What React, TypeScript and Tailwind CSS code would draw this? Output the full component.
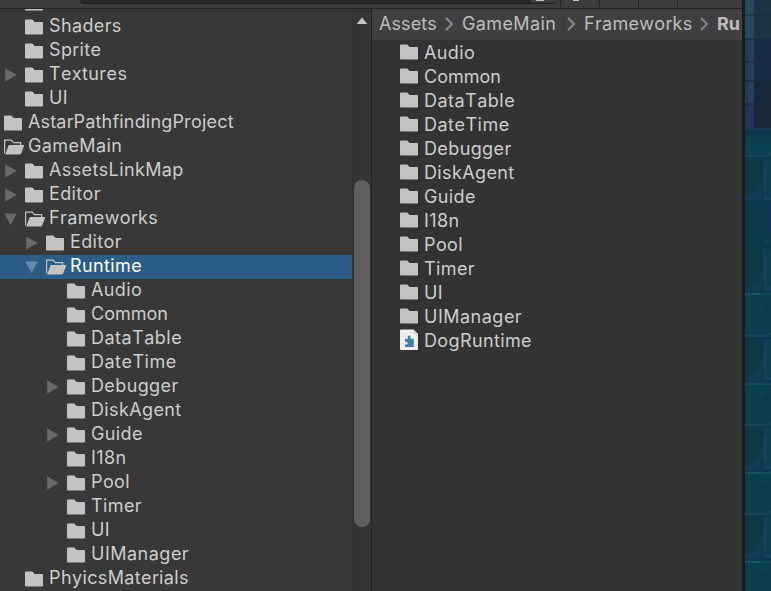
import React from "react";

type Arrow = "right" | "down" | null;
type Row = { name: string; depth: number; arrow?: Arrow; open?: boolean; selected?: boolean };

const tree: Row[] = [
  { name: "", depth: 1 },
  { name: "Shaders", depth: 1 },
  { name: "Sprite", depth: 1 },
  { name: "Textures", depth: 1, arrow: "right" },
  { name: "UI", depth: 1 },
  { name: "AstarPathfindingProject", depth: 0 },
  { name: "GameMain", depth: 0, open: true },
  { name: "AssetsLinkMap", depth: 1, arrow: "right" },
  { name: "Editor", depth: 1, arrow: "right" },
  { name: "Frameworks", depth: 1, arrow: "down", open: true },
  { name: "Editor", depth: 2, arrow: "right" },
  { name: "Runtime", depth: 2, arrow: "down", open: true, selected: true },
  { name: "Audio", depth: 3 },
  { name: "Common", depth: 3 },
  { name: "DataTable", depth: 3 },
  { name: "DateTime", depth: 3 },
  { name: "Debugger", depth: 3, arrow: "right" },
  { name: "DiskAgent", depth: 3 },
  { name: "Guide", depth: 3, arrow: "right" },
  { name: "I18n", depth: 3 },
  { name: "Pool", depth: 3, arrow: "right" },
  { name: "Timer", depth: 3 },
  { name: "UI", depth: 3 },
  { name: "UIManager", depth: 3 },
  { name: "PhyicsMaterials", depth: 1 },
];

const files = ["Audio", "Common", "DataTable", "DateTime", "Debugger", "DiskAgent", "Guide", "I18n", "Pool", "Timer", "UI", "UIManager"];

const indents = ["pl-0", "pl-[21px]", "pl-[42px]", "pl-[63px]"];

// Names whose letters need a slightly different spacing than the default.
const tracking: Record<string, string> = {
  AstarPathfindingProject: "tracking-[0.18px]",
  Common: "tracking-[0px]",
  UIManager: "tracking-[0.5px]",
  DataTable: "tracking-[0.5px]",
  DateTime: "tracking-[0.5px]",
};

function Folder() {
  return (
    <svg width="21" height="18" viewBox="0 0 21 18" className="shrink-0">
      <path d="M0 2.5Q0 1.5 1 1.5H7.3L9.6 4H17Q18 4 18 5V15.4Q18 16.4 17 16.4H1Q0 16.4 0 15.4Z" fill="#c3c3c3" />
    </svg>
  );
}

function OpenFolder() {
  return (
    <svg width="21" height="18" viewBox="0 0 21 18" className="shrink-0">
      <path d="M.6 15.5V2.2H7.3L9.4 4.6H16.6V7" fill="none" stroke="#c3c3c3" strokeWidth="1.2" />
      <path d="M5.6 7H19.6Q20.4 7 20.1 7.8L17.2 15.6Q16.9 16.4 16 16.4H1.2L4.3 8Q4.7 7 5.6 7Z" fill="#c3c3c3" />
    </svg>
  );
}

function Triangle({ dir, selected }: { dir?: Arrow; selected?: boolean }) {
  return (
    <svg width="21" height="24" viewBox="0 0 21 24" className="shrink-0" fill={selected ? "#668aaa" : "#696969"}>
      {dir === "right" && <path d="M1.2 5.6L13 12L1.2 18.4Z" />}
      {dir === "down" && <path d="M.4 6.5H12.8L6.6 18Z" />}
    </svg>
  );
}

function Label({ name }: { name: string }) {
  return <span className={`whitespace-nowrap ${tracking[name] ?? "tracking-[0.38px]"}`}>{name}</span>;
}

function TreeRow({ row }: { row: Row }) {
  return (
    <div className={`flex h-6 shrink-0 items-center ${row.selected ? "bg-[#2c5d87] text-white" : ""}`}>
      <div className={`flex items-center ${indents[row.depth]}`}>
        <div className="-ml-[17px] flex h-6 w-[21px]">
          <Triangle dir={row.arrow} selected={row.selected} />
        </div>
        <div className="mr-[3px]">{row.open ? <OpenFolder /> : <Folder />}</div>
        <div className="pb-[2px]">
          <Label name={row.name} />
        </div>
      </div>
    </div>
  );
}

function ScriptAssembly() {
  return (
    <svg width="21" height="22" viewBox="0 0 21 22" className="shrink-0">
      <path d="M0 1.5Q0 .5 1 .5H13.5L18 5V20Q18 21 17 21H1Q0 21 0 20Z" fill="#efefef" />
      <path d="M13.5 .5L18 5H14.5Q13.5 5 13.5 4Z" fill="#d2d2d2" />
      <path d="M7.9 9.8V8.8A1.5 1.5 0 1 1 10.5 8.8V9.8H13.8V18H5V15.6H6.2A1.4 1.4 0 0 0 6.2 12.8H5V9.8Z" fill="#437fa5" />
    </svg>
  );
}

function Separator() {
  return (
    <svg width="9" height="14" viewBox="0 0 9 14" className="shrink-0">
      <path d="M1 1L7 7L1 13" fill="none" stroke="#858585" strokeWidth="2.2" />
    </svg>
  );
}

const wallTops = [155, 245, 335, 424, 513];

function GameBackdrop() {
  return (
    <svg width="26" height="591" viewBox="0 0 26 591" shapeRendering="crispEdges" className="shrink-0">
      <rect width="26" height="591" fill="#0c3e52" />
      <rect width="26" height="129" fill="#192b43" />
      <rect width="26" height="39" fill="#1c3442" />
      <rect width="9" height="129" fill="#243b58" />
      <rect width="9" height="39" fill="#254961" />
      <rect y="104" width="9" height="25" fill="#25335a" />
      <rect x="9" y="80" width="17" height="49" fill="#182839" />
      <rect x="4" y="16" width="5" height="86" fill="#29466a" opacity=".4" />
      {[14, 38, 61, 80, 103].map((y) => (
        <rect key={y} y={y} width="26" height="2" fill="#172b43" opacity=".6" />
      ))}
      <rect x="16" y="14" width="1" height="26" fill="#163047" />
      <rect x="16" y="81" width="1" height="22" fill="#18303f" />
      <rect y="128" width="26" height="2" fill="#1b3855" />
      <rect y="130" width="26" height="5" fill="#0a344a" />
      <rect y="144" width="26" height="13" fill="#0c4054" />
      {wallTops.map((y) => (
        <g key={y}>
          <rect y={y} width="24" height="2" fill="#19435d" />
          <rect x="23" y={y - 2} width="3" height="2" fill="#19435d" />
          <rect y={y + 2} width="26" height="2" fill="#09394d" />
          <rect y={y + 4} width="18" height="41" fill="#0e3a48" />
          <rect x="18" y={y + 4} width="8" height="41" fill="#0d4054" />
          <rect x="15" y={y + 4} width="3" height="41" fill="#0b374d" />
          <path d={`M15 ${y + 24}V${y + 32}H12V${y + 38}H6V${y + 42}H0V${y + 45}H17V${y + 24}Z`} fill="#123c5c" opacity=".7" />
          <rect x="19" y={y + 12} width="2" height="24" fill="#124857" />
          <rect x="20" y={y + 42} width="6" height="3" fill="#174360" />
          <rect y={y + 45} width="26" height="3" fill="#0b3950" />
          <rect y={y + 48} width="15" height="2" fill="#155060" />
          <rect x="15" y={y + 48} width="11" height="2" fill="#11485a" />
          <rect x="18" y={y + 60} width="6" height="5" fill="#0c394c" />
        </g>
      ))}
      <rect y="203" width="26" height="45" fill="#0a384d" />
      <rect x="24" y="204" width="2" height="30" fill="#10375a" />
      <rect x="19" y="239" width="5" height="4" fill="#123c5c" />
    </svg>
  );
}

export default function App() {
  return (
    <div className="flex h-[591px] w-[771px] overflow-hidden bg-[#383838] font-['Inter',sans-serif] text-[18px] leading-6 text-[#cdcdcd] [font-kerning:none]">
      <div className="flex w-[742px] shrink-0 flex-col overflow-hidden">
        <div className="flex h-[9px] shrink-0 items-start border-b border-[#232323] bg-[#3c3c3c]">
          <div className="ml-20 flex h-1 w-[476px] justify-end overflow-hidden rounded-b-md border-b border-[#1e1e1e] bg-[#2a2a2a]">
            <div className="flex w-[26px] justify-center border-l border-[#202020] bg-[#3c3c3c] pr-2">
              <div className="h-px w-2 bg-[#c4c4c4]" />
            </div>
          </div>
          <div className="ml-1 flex h-[7px] w-10 justify-center border-x border-[#232323]">
            <div className="-ml-2 h-px w-1.5 bg-[#c4c4c4]" />
          </div>
          <div className="h-[7px] w-[39px] border-r border-[#232323]" />
          <div className="h-[7px] w-[39px] border-r border-[#232323]" />
        </div>
        <div className="flex min-h-0 flex-1">
          <div className="flex w-[352px] shrink-0 flex-col overflow-hidden">
            <div className="-mt-[18px] flex flex-col">
              {tree.map((row, i) => (
                <TreeRow key={i} row={row} />
              ))}
            </div>
          </div>
          <div className="flex w-5 shrink-0 flex-col items-center border-x border-l-[#323232] border-r-[#202020] bg-[#353535]">
            <svg width="12" height="8" viewBox="0 0 12 8" className="mt-[8px] shrink-0">
              <path d="M6 .5L11.3 7H.7Z" fill="#c4c4c4" />
            </svg>
            <div className="mt-[155px] h-[347px] w-4 shrink-0 rounded-full bg-[#5f5f5f]" />
          </div>
          <div className="flex min-w-0 flex-1 flex-col bg-[#333333]">
            <div className="flex h-[31px] shrink-0 items-center overflow-hidden whitespace-nowrap bg-[#404040] pb-px pl-[7px] text-[#bdbdbd]">
              <span className="w-[66px] shrink-0 tracking-[0.1px]">Assets</span>
              <Separator />
              <span className="ml-2 w-[105px] shrink-0 tracking-[0.38px]">GameMain</span>
              <Separator />
              <span className="ml-2 w-[116px] shrink-0 tracking-[0.3px]">Frameworks</span>
              <Separator />
              <span className="ml-2 shrink-0 font-bold">Ru</span>
            </div>
            <div className="flex flex-col pl-7 pt-px">
              {files.map((name) => (
                <div key={name} className="flex h-6 items-center">
                  <div className="mr-[3px] pb-[2px]">
                    <Folder />
                  </div>
                  <Label name={name} />
                </div>
              ))}
              <div className="flex h-6 items-center">
                <div className="mr-[3px] pb-[2px]">
                  <ScriptAssembly />
                </div>
                <Label name="DogRuntime" />
              </div>
            </div>
          </div>
        </div>
      </div>
      <div className="w-[3px] shrink-0 bg-[#191919]" />
      <GameBackdrop />
    </div>
  );
}
